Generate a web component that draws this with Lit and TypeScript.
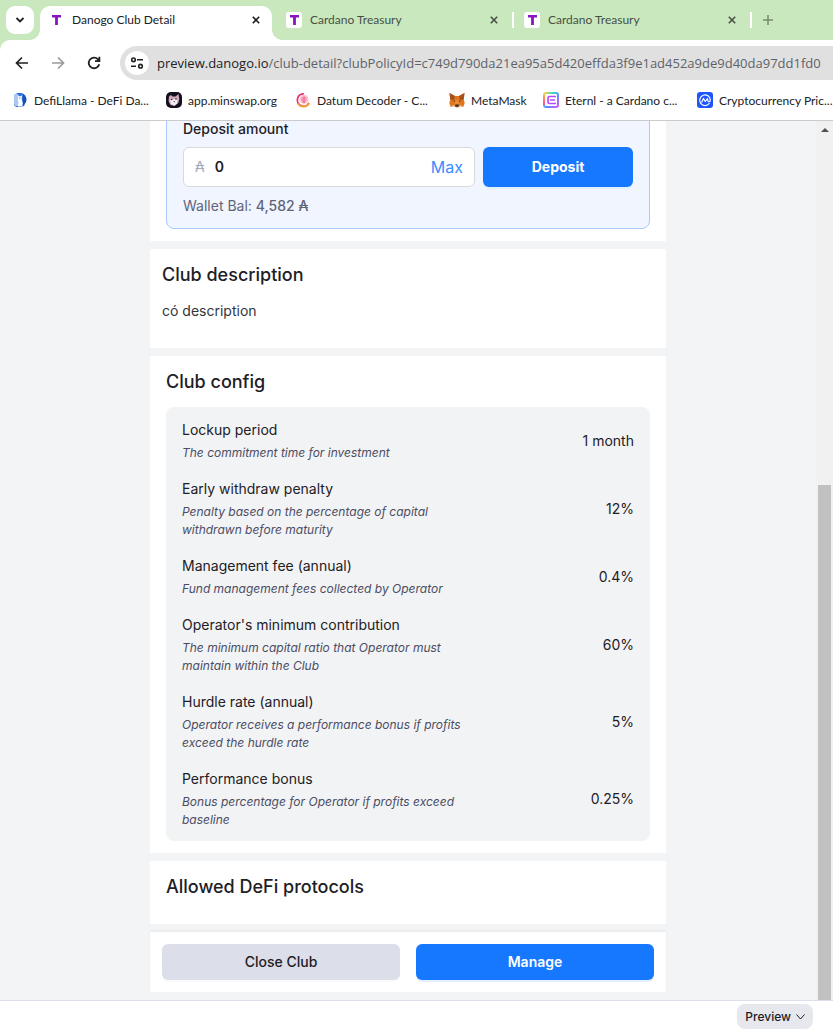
import { LitElement, html, css, svg } from "lit";
import { customElement } from "lit/decorators.js";

const closeGlyph = html`<svg class="x" viewBox="0 0 8 8" aria-hidden="true"><path d="M.8.8l6.4 6.4M7.2.8L.8 7.2" /></svg>`;

const bookmarkIcons = {
  llama: svg`<path d="M5 1h4a5.500 6.500 0 0 1 5.300 8L12 14l-3 1H4L2 13V4z" fill="#2c6fd6"/><path d="M2 2h4v12H3.500L2 12z" fill="#a9c8f3"/><path d="M11 2.500a6.500 6 0 0 1 2.500 8L11 14z" fill="#1c4fae"/><path d="M6.300 3l1 1.300h1.400L9.700 3l.4 2.500-.3 2.500 1 3-.6 3.500H5.800l.4-4-.5-3.500z" fill="#fff"/><circle cx="7.300" cy="6" r=".5" fill="#1c4fae"/><circle cx="9" cy="6" r=".5" fill="#1c4fae"/>`,
  minswap: svg`<rect width="16" height="16" rx="5" fill="#15101f"/><path d="M3 4.500L5 3l1.500 1.500h3L12.500 2l.8 5-1 4L8.500 14 4.500 13 2.500 9z" fill="#cfa9bb"/><path d="M4 8.500l3-1.500 4.500.8-.5 3.700-2.500 2L5 12z" fill="#f4eff3"/><circle cx="5.800" cy="7.500" r=".7" fill="#15101f"/><circle cx="10" cy="7" r=".7" fill="#15101f"/><path d="M7.200 9.300h2l-1 1.200z" fill="#3b2835"/>`,
  datum: svg`<path d="M9 1.800A6.200 6.200 0 1 0 14 11" fill="none" stroke="#e8336d" stroke-width="1.800"/><path d="M3 11.500A6.200 6.200 0 0 0 14 11" fill="none" stroke="#f6a13c" stroke-width="1.800"/><circle cx="9" cy="7.300" r="4.600" fill="#fbc6d3"/><path d="M6.500 6h5M6 8h5.500M7 10h3.500M9 4v7" stroke="#ee5586" stroke-width=".8" fill="none"/>`,
  fox: svg`<path d="M.5 1L6 4h4l5.500-3-.8 6.500 1 3.500-1.400 4-3.600-1-1.700 1.500H7L5.300 14l-3.600 1-1.400-4 1-3.500z" fill="#e2761b"/><path d="M.5 1L6 4l-1 4-3.700-.5zM15.500 1L10 4l1 4 3.700-.5z" fill="#a6501e"/><path d="M5 8h6l-1.200 5H6.200z" fill="#f08a2e"/><path d="M4.200 8.500l2 .3-.3 1.400zM11.800 8.500l-2 .3.300 1.400z" fill="#233447"/><path d="M6.400 12.500h3.200l.3 2H6.100z" fill="#2b2b2b"/><path d="M2 14l3.300-1 1 2zM14 14l-3.300-1-1 2z" fill="#d8c4b4"/>`,
  eternl: svg`<defs><linearGradient id="et" x1="0" y1="0" x2="1" y2="1"><stop offset="0" stop-color="#ffd23f"/><stop offset=".3" stop-color="#3bdcd0"/><stop offset=".6" stop-color="#5b8bff"/><stop offset="1" stop-color="#d05aff"/></linearGradient><linearGradient id="eu" x1="0" y1="0" x2="0" y2="1"><stop offset="0" stop-color="#ffb03f"/><stop offset="1" stop-color="#ff3fb0"/></linearGradient></defs><rect x="1" y="1" width="14" height="14" rx="2" fill="#fff" stroke="url(#et)" stroke-width="2"/><path d="M0 3h2v10H0z" fill="url(#eu)"/><path d="M13 4.500H6.500A1.500 1.500 0 0 0 5 6v4a1.500 1.500 0 0 0 1.500 1.500H13M7 8h5" fill="none" stroke="#b64bff" stroke-width="1.700"/>`,
  cmc: svg`<rect width="16" height="16" rx="3" fill="#1f55ff"/><path d="M12.200 11.500A5.300 5.300 0 1 1 13.300 8c0 2.200-2.300 2.300-2.500.5l-.3-2L8.300 9.500 6.500 6.500 4.800 10" fill="none" stroke="#fff" stroke-width="1.200" stroke-linejoin="round" stroke-linecap="round"/>`,
};

const bookmarks = [
  { icon: bookmarkIcons.llama, label: "DefiLlama - DeFi Da..." },
  { icon: bookmarkIcons.minswap, label: "app.minswap.org" },
  { icon: bookmarkIcons.datum, label: "Datum Decoder - C..." },
  { icon: bookmarkIcons.fox, label: "MetaMask" },
  { icon: bookmarkIcons.eternl, label: "Eternl - a Cardano c..." },
  { icon: bookmarkIcons.cmc, label: "Cryptocurrency Pric..." },
];

@customElement("browser-chrome")
export class BrowserChrome extends LitElement {
  static styles = css`
    :host { display: block; background: #cae8be; font-family: Lato, "Open Sans", sans-serif; font-size: 12px; color: #202124; }
    button { border: 0; padding: 0; background: none; font: inherit; color: inherit; display: grid; place-items: center; }
    svg { display: block; fill: none; }
    .strip { display: flex; height: 34px; padding: 6px 0 0 6px; overflow: hidden; }
    .search { width: 28px; height: 28px; border-radius: 9px; background: #fff; margin-right: 6px; flex: none; }
    .tab { position: relative; display: flex; align-items: center; flex: none; width: 232px; height: 28px; padding-bottom: 6px; border-radius: 10px 10px 0 0; color: #474f45; margin-right: 6px; }
    .tab.active { background: #fff; color: #202124; }
    .tab.active::before, .tab.active::after { content: ""; position: absolute; bottom: 0; width: 10px; height: 10px; }
    .tab.active::before { right: 100%; background: radial-gradient(circle at 0 0, transparent 9.5px, #fff 10px); }
    .tab.active::after { left: 100%; background: radial-gradient(circle at 100% 0, transparent 9.5px, #fff 10px); }
    .fav { width: 16px; height: 16px; margin-left: 8px; background: #fff; border-radius: 3px; }
    .name { flex: 1; margin-left: 8px; line-height: 16px; white-space: nowrap; }
    .close { width: 16px; height: 16px; margin-right: 8px; }
    .x { width: 8px; height: 8px; stroke: currentColor; stroke-width: 1.6; }
    .tab:not(.active)::after { content: ""; position: absolute; right: -4px; top: 6px; width: 2px; height: 16px; background: #fff; }
    .plus { width: 28px; height: 28px; flex: none; color: #76896f; }
    .toolbar { display: flex; align-items: center; height: 46px; background: #fff; border-radius: 10px 0 0 0; overflow: hidden; }
    .nav { width: 36px; height: 34px; flex: none; stroke: #202124; }
    .nav:first-child { margin-left: 4px; }
    .nav.off { stroke: #9a9b9c; }
    .omni { display: flex; align-items: center; flex: 1; min-width: 0; height: 34px; margin-left: 8px; padding-left: 5px; border-radius: 17px 0 0 17px; background: #e0e0e0; font-family: "Open Sans", "Noto Sans", sans-serif; font-size: 13px; }
    .site { width: 24px; height: 24px; border-radius: 50%; background: #fff; flex: none; margin-right: 8px; }
    .host { flex: none; }
    .url { flex: 1; min-width: 0; border: 0; padding: 0; outline: 0; background: none; font: inherit; color: #5f6368; }
    .marks { display: grid; grid-template-columns: 154px 129px 154px 94px 154px auto; align-items: center; height: 28px; padding: 0 0 6px 12px; background: #fff; border-bottom: 1px solid #cbcbcb; }
    .mark { display: flex; align-items: center; gap: 6px; color: #202124; text-decoration: none; white-space: nowrap; }
    .mark svg { width: 16px; height: 16px; flex: none; }
  `;

  private tab(name: string, active = false) {
    return html`<div class="tab ${active ? "active" : ""}">
      <svg class="fav" viewBox="0 0 16 16" aria-hidden="true"><path d="M4 3h9v2.500H9.900V13H7.100V5.500H4z" fill="#8716c0" /></svg>
      <span class="name">${name}</span>
      <button class="close" aria-label="Close tab">${closeGlyph}</button>
    </div>`;
  }

  render() {
    return html`
      <div class="strip">
        <button class="search" aria-label="Search tabs">
          <svg width="10" height="6" viewBox="0 0 10 6"><path d="M1.500 1L5 4.500 8.500 1" stroke="#202124" stroke-width="1.800" /></svg>
        </button>
        ${this.tab("Danogo Club Detail", true)} ${this.tab("Cardano Treasury")} ${this.tab("Cardano Treasury")}
        <button class="plus" aria-label="New tab">
          <svg width="12" height="12" viewBox="0 0 12 12"><path d="M6 1v10M1 6h10" stroke="currentColor" stroke-width="1.500" /></svg>
        </button>
      </div>
      <div class="toolbar">
        <button class="nav" aria-label="Back"><svg width="14" height="14" viewBox="0 0 14 14"><path d="M13 7H2M7 1.500L1.500 7 7 12.500" stroke-width="1.700" /></svg></button>
        <button class="nav off" aria-label="Forward"><svg width="14" height="14" viewBox="0 0 14 14"><path d="M1 7h11M7 1.500L12.500 7 7 12.500" stroke-width="1.700" /></svg></button>
        <button class="nav" aria-label="Reload"><svg width="14" height="14" viewBox="0 0 14 14"><path d="M12.200 8.200A5.300 5.300 0 1 1 11 3.400l1.300 1.400M12.400.8v4.400H8" stroke-width="1.800" /></svg></button>
        <div class="omni">
          <button class="site" aria-label="Site information"><svg width="14" height="12" viewBox="0 0 14 12"><g stroke="#202124" stroke-width="1.600"><circle cx="3.500" cy="2.800" r="1.800" /><path d="M7 2.800h6M1 9.200h5" /><circle cx="10.500" cy="9.200" r="1.800" /></g></svg></button>
          <label class="host" for="url">preview.danogo.io</label>
          <input class="url" id="url" type="text" .value=${"/club-detail?clubPolicyId=c749d790da21ea95a5d420effda3f9e1ad452a9de9d40da97dd1fd0"} />
        </div>
      </div>
      <nav class="marks">
        ${bookmarks.map((b) => html`<a class="mark" href="#"><svg viewBox="0 0 16 16" aria-hidden="true">${b.icon}</svg>${b.label}</a>`)}
      </nav>
    `;
  }
}

const config = [
  ["Lockup period", "The commitment time for investment", "1 month"],
  ["Early withdraw penalty", "Penalty based on the percentage of capital withdrawn before maturity", "12%"],
  ["Management fee (annual)", "Fund management fees collected by Operator", "0.4%"],
  ["Operator's minimum contribution", "The minimum capital ratio that Operator must maintain within the Club", "60%"],
  ["Hurdle rate (annual)", "Operator receives a performance bonus if profits exceed the hurdle rate", "5%"],
  ["Performance bonus", "Bonus percentage for Operator if profits exceed baseline", "0.25%"],
];

@customElement("club-detail")
export class ClubDetail extends LitElement {
  static styles = css`
    :host { display: flex; flex-direction: column; justify-content: flex-end; align-items: center; min-width: 0; overflow: hidden; background: #f3f4f6; font-family: Inter, sans-serif; font-size: 14px; line-height: 22px; color: #1d2025; }
    * { box-sizing: border-box; }
    .column { display: flex; flex-direction: column; gap: 8px; width: 100%; max-width: 516px; padding-bottom: 8px; flex: none; }
    section { background: #fff; padding: 12px 16px; }
    h2 { margin: 0; font-size: 18px; line-height: 28px; font-weight: 500; }
    .deposit { border: 1px solid #a9c9fb; border-radius: 8px; background: #f0f5ff; padding: 16px 16px 11px; }
    .label { display: block; font-weight: 500; }
    .row { display: flex; gap: 8px; margin: 7px 0 8px; }
    .field { display: flex; align-items: center; flex: 1; min-width: 0; height: 40px; border: 1px solid #d9d9d9; border-radius: 6px; background: #fff; padding: 0 11px; gap: 10px; }
    .unit { color: #a6aabf; }
    input { flex: 1; min-width: 0; border: 0; outline: 0; padding: 0; background: none; font: inherit; font-weight: 600; color: inherit; }
    button { border: 0; padding: 0; font: inherit; border-radius: 6px; }
    .max { background: none; color: #3b8cff; font-size: 16px; }
    .primary { background: #1677ff; color: #fff; font-weight: 600; box-shadow: 0 2px 0 #e2f0ff; }
    .row .primary { width: 150px; font-weight: 700; }
    .balance { color: #5f6478; display: block; }
    .balance b { font-weight: 500; }
    .about { padding: 12px 12px 25px; }
    .about p { margin: 10px 0 0; line-height: 24px; color: #33363c; }
    .panel { margin: 11px 0 0; padding: 12px 16px; background: #f2f3f5; border-radius: 8px; display: grid; gap: 16px; }
    .item { display: grid; grid-template-columns: 9fr 5fr; align-items: center; }
    .desc { margin-top: 3px; font-size: 12px; line-height: 18px; font-style: italic; color: #4b4d63; }
    dd { margin: 0; text-align: right; }
    .protocols { padding-bottom: 23px; }
    .actions { display: grid; grid-template-columns: 1fr 1fr; gap: 16px; padding: 12px; background: #fff; box-shadow: 0 -2px 2px #0000000a; }
    .actions button { height: 36px; }
    .plain { background: #dcdee9; color: #1d2025; box-shadow: 0 2px 0 #00000005; font-weight: 500; }
  `;

  render() {
    return html`<div class="column">
      <section>
        <div class="deposit">
          <label class="label" for="amount">Deposit amount</label>
          <div class="row">
            <div class="field">
              <span class="unit">₳</span>
              <input id="amount" type="text" value="0" />
              <button class="max">Max</button>
            </div>
            <button class="primary">Deposit</button>
          </div>
          <span class="balance">Wallet Bal: <b>4,582 ₳</b></span>
        </div>
      </section>
      <section class="about">
        <h2>Club description</h2>
        <p>có description</p>
      </section>
      <section>
        <h2>Club config</h2>
        <dl class="panel">
          ${config.map(
            ([title, desc, value]) => html`<div class="item">
              <dt>${title}<div class="desc">${desc}</div></dt>
              <dd>${value}</dd>
            </div>`
          )}
        </dl>
      </section>
      <section class="protocols"><h2>Allowed DeFi protocols</h2></section>
      <div class="actions">
        <button class="plain">Close Club</button>
        <button class="primary">Manage</button>
      </div>
    </div>`;
  }
}

@customElement("app-root")
export class AppRoot extends LitElement {
  static styles = css`
    :host { display: grid; grid-template-rows: auto minmax(0, 1fr) auto; height: 100vh; background: #fff; overflow: hidden; }
    .view { display: grid; grid-template-columns: minmax(0, 1fr) 17px; min-height: 0; }
    .bar { display: flex; flex-direction: column; align-items: center; background: #f1f1f1; }
    .up { width: 8px; height: 4px; margin-top: 7px; fill: #505050; display: block; flex: none; }
    .thumb { width: 13px; margin-top: auto; height: 58.6%; background: #c1c1c1; }
    .status { display: flex; justify-content: flex-end; padding: 3px 20px 0 0; border-top: 1px solid #dcdee9; }
    .preview { display: flex; align-items: center; gap: 5px; height: 25px; padding: 0 8px; border: 0; border-radius: 8px; background: #e7e8ee; color: #1d2025; font: 500 12px/18px Inter, sans-serif; }
    .preview svg { fill: none; stroke: #1d2025; }
  `;

  render() {
    return html`
      <browser-chrome></browser-chrome>
      <div class="view">
        <club-detail></club-detail>
        <div class="bar"><svg class="up" viewBox="0 0 8 4"><path d="M0 4L4 0l4 4z" /></svg><div class="thumb"></div></div>
      </div>
      <div class="status">
        <button class="preview">Preview <svg width="9" height="6" viewBox="0 0 9 6"><path d="M.5.5l4 4.500 4-4.500" /></svg></button>
      </div>
    `;
  }
}
